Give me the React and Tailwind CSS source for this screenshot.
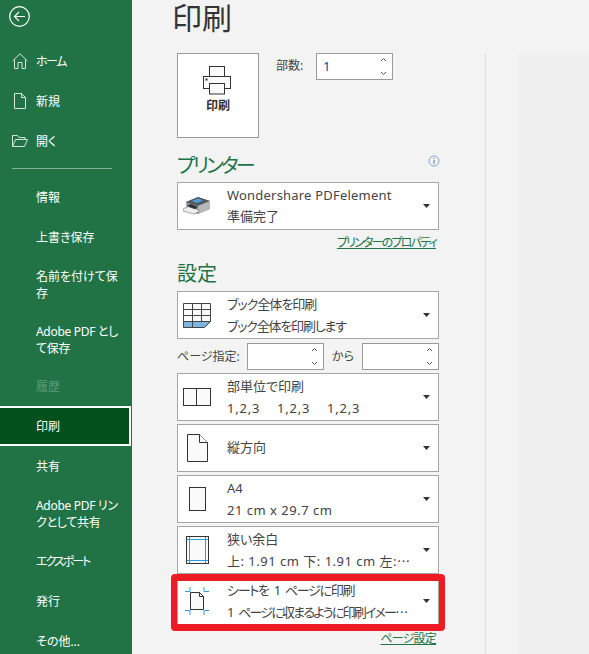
import React from 'react';

function NavItem({ label, icon, two, dim, active, tight }) {
  if (active) {
    return (
      <div className="h-10 shrink-0 flex items-center pl-[36px] pt-[2px] bg-[#02501c] border-[2px] border-l-0 border-white text-white text-[12px] mr-px">
        {label}
      </div>
    );
  }
  return (
    <div className={`shrink-0 flex items-center text-[12px] [font-feature-settings:'palt'] ${two ? 'h-[54.5px] leading-[17px] whitespace-pre-line' : 'h-10'} ${dim ? 'text-[#5b9c78]' : 'text-white'} ${icon ? 'pl-[12px]' : 'pl-[36px]'}`}>
      {icon && <span className="w-[24px] flex">{icon}</span>}
      <span className={`pt-[2px] ${tight || ''}`}>{label}</span>
    </div>
  );
}

const Chevron = () => (
  <svg width="7" height="4" viewBox="0 0 7 4" className="fill-[#333333]"><path d="M0 0h7L3.5 4z" /></svg>
);

function SpinArrows() {
  return (
    <svg width="7" height="19" viewBox="0 0 7 19" fill="none" stroke="#555555" strokeWidth="1">
      <path d="M1 4l2.5-2.5L6 4" />
      <path d="M1 15l2.5 2.5L6 15" />
    </svg>
  );
}

function Spin({ className }) {
  return (
    <div className={`h-[27px] bg-white border border-[#9a9a9a] flex items-center justify-end pr-[5px] ${className}`}>
      <SpinArrows />
    </div>
  );
}

function Dots() {
  return <span className="font-['Noto_Sans_CJK_JP'] tracking-normal">…</span>;
}

function Card({ icon, title, sub }) {
  return (
    <div className="h-[48px] shrink-0 bg-white border border-[#a6a6a6] flex items-center">
      <div className="w-[38px] mr-[11px] shrink-0 flex justify-center">{icon}</div>
      <div className="flex-1 min-w-0 text-[13px] text-[#444444] leading-[22px] whitespace-nowrap [font-feature-settings:'palt']">
        <div className={sub ? '' : 'pb-[3px]'}>{title}</div>
        {sub && <div>{sub}</div>}
      </div>
      <div className="w-[15px] shrink-0 flex"><Chevron /></div>
    </div>
  );
}

const PrinterBig = () => (
  <svg width="30" height="29" viewBox="0 0 30 29" fill="#fafafa" stroke="#333333" strokeWidth="1">
    <rect x="6.5" y="0.5" width="15" height="11" />
    <rect x="0.5" y="10.5" width="27" height="12" />
    <rect x="6.5" y="17.5" width="15" height="10.5" />
    <rect x="2.5" y="12.5" width="2" height="2" fill="#333333" stroke="none" />
  </svg>
);

const PrinterPhoto = () => (
  <svg width="28" height="18" viewBox="0 0 28 18">
    <path d="M3 5L15 0l12 4v8l-12 5-11-3z" fill="#8b9094" />
    <path d="M3 5L15 0l12 4-12 5z" fill="#555a5e" />
    <path d="M9 4l6-2.5L20 3.5 14 6z" fill="#4aa3df" />
    <path d="M15 9l12-5v8l-12 5z" fill="#b4b8bb" />
    <path d="M0 12l5-2.5L16 13v1.5L11 17 0 14z" fill="#efefef" stroke="#555555" strokeWidth="0.5" />
    <path d="M4 9l4-2 7 3-3.5 2z" fill="#2f3336" />
  </svg>
);

const SheetIcon = () => (
  <svg width="28" height="25" viewBox="0 0 28 25" fill="none" stroke="#444444" strokeWidth="1">
    <path d="M0.5 0.5h27v18h-27z" fill="#fafafa" />
    <path d="M9.5 0.5v18M18.5 0.5v18M0.5 6.5h27M0.5 12.5h27" />
    <path d="M0.5 18.5h27l-6 6h-21z" fill="#7db4e0" />
    <path d="M9.5 18.5v6" />
  </svg>
);

const CollateIcon = () => (
  <svg width="28" height="18" viewBox="0 0 28 18" fill="#fafafa" stroke="#333333" strokeWidth="1">
    <rect x="0.5" y="0.5" width="13" height="17" />
    <rect x="13.5" y="0.5" width="14" height="17" />
  </svg>
);

const PageIcon = () => (
  <svg width="21" height="28" viewBox="0 0 21 28" fill="#fafafa" stroke="#333333" strokeWidth="1">
    <path d="M0.5 0.5h12l8 8v19h-20z" />
    <path d="M12.5 0.5v8h8" />
  </svg>
);

const A4Icon = () => (
  <svg width="17" height="24" viewBox="0 0 17 24" fill="#fafafa" stroke="#333333" strokeWidth="1">
    <rect x="0.5" y="0.5" width="16" height="23" />
  </svg>
);

const MarginIcon = () => (
  <svg width="23" height="28" viewBox="0 0 23 28" fill="#fafafa">
    <rect x="0.5" y="0.5" width="22" height="27" stroke="#333333" />
    <path d="M3.5 1v26M19.5 1v26M1 3.5h21M1 24.5h21" stroke="#2b9be0" fill="none" />
  </svg>
);

const FitIcon = () => (
  <svg width="24" height="28" viewBox="0 0 24 28" fill="none">
    <path d="M0 4.5h5V0M19 0v4.5h5M0 23.5h5V28M19 28v-4.5h5" stroke="#2b9be0" />
    <path d="M5.5 5.5h9l4 4v13h-13z" fill="#fafafa" stroke="#333333" />
    <path d="M14.5 5.5v4h4" stroke="#333333" />
  </svg>
);

export default function App() {
  return (
    <div className="w-[589px] h-[654px] overflow-hidden flex bg-[#f3f3f3] font-['Noto_Sans','Noto_Sans_CJK_JP',sans-serif]">
      <aside className="w-[132px] shrink-0 bg-[#217346] flex flex-col">
        <div className="h-[41px] shrink-0 flex items-start pl-[9px] pt-[6px]">
          <svg width="21" height="21" viewBox="0 0 21 21" fill="none" stroke="#ffffff" strokeWidth="1.2">
            <circle cx="10.5" cy="10.5" r="9.8" />
            <path d="M16 10.5H5.5M10 6l-4.5 4.5L10 15" />
          </svg>
        </div>
        <NavItem label="ホーム" tight="tracking-[-1.5px]" icon={
          <svg width="16" height="16" viewBox="0 0 16 16" fill="none" stroke="#d6e4dc" strokeWidth="1"><path d="M0.5 8L8 0.8 15.5 8M2.5 6.5v9h3.5v-6h4v6h3.5v-9" /></svg>
        } />
        <NavItem label="新規" icon={
          <svg width="16" height="16" viewBox="0 0 16 16" fill="none" stroke="#d6e4dc" strokeWidth="1"><path d="M2.5 0.5h7l4 4v11h-11zM9.5 0.5v4h4" /></svg>
        } />
        <NavItem label="開く" icon={
          <svg width="16" height="12" viewBox="0 0 16 12" fill="none" stroke="#d6e4dc" strokeWidth="1"><path d="M0.5 11.5V0.5h5l1.5 2h6v2M0.5 11.5l3-7h12l-3 7z" /></svg>
        } />
        <div className="h-[16px] shrink-0 pt-[7px]">
          <div className="ml-[12px] w-[100px] h-px bg-[#7fb296]" />
        </div>
        <NavItem label="情報" />
        <NavItem label="上書き保存" />
        <NavItem label={'名前を付けて保\n存'} two />
        <NavItem label={'Adobe PDF とし\nて保存'} two tight="tracking-[-0.3px]" />
        <NavItem label="履歴" dim />
        <NavItem label="印刷" active />
        <NavItem label="共有" />
        <NavItem label={'Adobe PDF リン\nクとして共有'} two tight="tracking-[-0.3px]" />
        <NavItem label="エクスポート" tight="tracking-[-2px]" />
        <NavItem label="発行" />
        <NavItem label="その他..." />
      </aside>

      <main className="relative flex-1 flex min-w-0">
        <div className="w-[307px] pl-[45px] shrink-0">
          <h1 className="h-[53px] -ml-[5px] text-[30px] leading-[36px] text-[#333333]">印刷</h1>
          <div className="flex items-start">
            <div className="w-[82px] h-[85px] bg-white border border-[#9a9a9a] flex flex-col items-center pt-[12px] text-[12px] font-bold text-[#333333]">
              <PrinterBig />
              <span className="mt-[2px]">印刷</span>
            </div>
            <span className="ml-[17px] mt-[4px] w-[40px] text-[12px] text-[#444444]">部数:</span>
            <div className="w-[77px] h-[27px] bg-white border border-[#9a9a9a] flex items-center justify-between pr-[5px] pl-[6px]">
              <span className="text-[13px] text-[#0b4f9e]">1</span>
              <SpinArrows />
            </div>
          </div>

          <div className="mt-[12px] h-[32px] flex items-start justify-between">
            <span className="mt-[2px] text-[20px] leading-[28px] text-[#217346] tracking-[-2.8px] [font-feature-settings:'palt']">プリンター</span>
            <svg width="12" height="12" viewBox="0 0 12 12" fill="none" className="mt-[5px] -mr-px"><circle cx="6" cy="6" r="5" stroke="#7fa8d8" /><path d="M6 5v4M6 3v1" stroke="#4c7fb8" /></svg>
          </div>
          <div className="h-[48px] bg-white border border-[#a6a6a6] flex items-center">
            <div className="w-[38px] mr-[11px] shrink-0 flex justify-center"><PrinterPhoto /></div>
            <div className="flex-1 min-w-0 text-[13px] text-[#444444] leading-[21px] whitespace-nowrap">
              <div className="tracking-[0.2px]">Wondershare PDFelement</div>
              <div>準備完了</div>
            </div>
            <div className="w-[15px] shrink-0 flex"><Chevron /></div>
          </div>
          <div className="mt-[5px] text-right text-[12px] leading-[16px] pr-[3px] text-[#217346] underline tracking-[-1.8px] [font-feature-settings:'palt']">プリンターのプロパティ</div>

          <div className="mt-[9px] h-[31px] text-[20px] leading-[28px] text-[#217346]">設定</div>
          <Card
            icon={<SheetIcon />}
            title={<span className="tracking-[-1px]">ブック全体を印刷</span>}
            sub={<span className="tracking-[-1.2px]">ブック全体を印刷します</span>}
          />
          <div className="h-[27px] mt-[4px] mb-[3px] flex items-center text-[12px] text-[#444444] [font-feature-settings:'palt']">
            <span className="w-[70px] shrink-0">ページ指定:</span>
            <Spin className="w-[77px]" />
            <span className="w-[38px] text-center">から</span>
            <Spin className="flex-1" />
          </div>
          <div className="flex flex-col gap-[3px]">
            <Card icon={<CollateIcon />} title="部単位で印刷" sub={<span className="flex tracking-[0.8px]"><span className="w-[50px]">1,2,3</span><span className="w-[50px]">1,2,3</span><span>1,2,3</span></span>} />
            <Card icon={<PageIcon />} title="縦方向" />
            <Card icon={<A4Icon />} title="A4" sub={<span className="tracking-[0.5px]">21 cm x 29.7 cm</span>} />
            <Card icon={<MarginIcon />} title="狭い余白" sub={<span className="tracking-[0.5px]">上: 1.91 cm 下: 1.91 cm 左:<Dots /></span>} />
            <Card
              icon={<FitIcon />}
              title={<span className="tracking-[-1.3px] [word-spacing:3px]">シートを 1 ページに印刷</span>}
              sub={<span className="tracking-[-1.8px] [word-spacing:4px]">1 ページに収まるように印刷イメー<Dots /></span>}
            />
          </div>
          <div className="mt-[6px] text-right text-[12px] leading-[16px] pr-[3px] text-[#217346] underline tracking-[-0.8px] [font-feature-settings:'palt']">ページ設定</div>
        </div>
        <div className="ml-[46px] mt-[53px] w-px bg-[#dedede]" />
        <div className="ml-[31px] mt-[54px] flex-1 bg-[#f0f0f0]" />
        <div className="absolute left-[39px] top-[574px] w-[274px] h-[57px] border-x-[6px] border-y-[7px] border-[#ed1c24] rounded-[4px]" />
      </main>
    </div>
  );
}
